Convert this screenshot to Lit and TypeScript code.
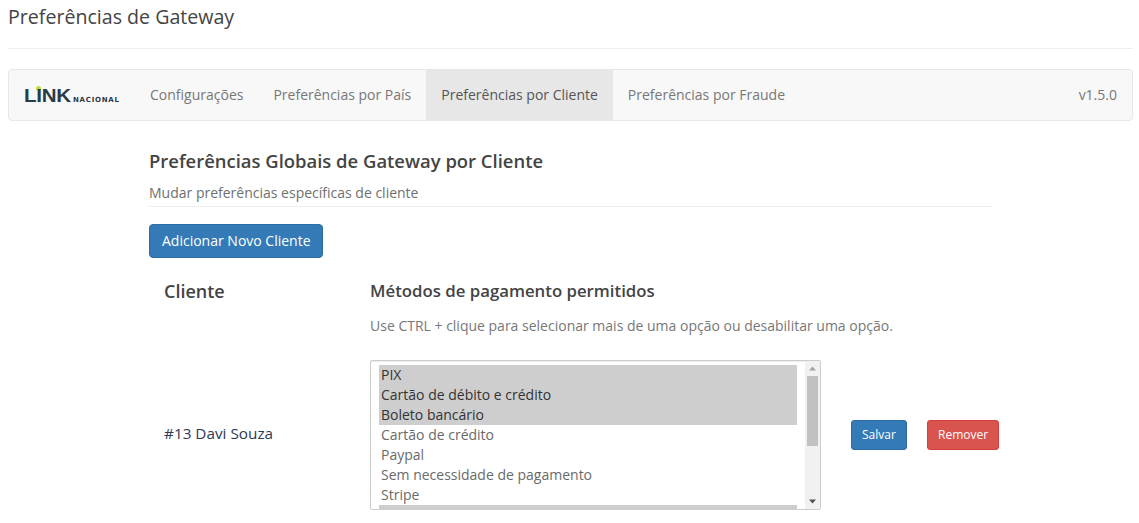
import { LitElement, html, css } from "lit";
import { customElement } from "lit/decorators.js";

const OPTIONS: [string, boolean][] = [
  ["PIX", true],
  ["Cartão de débito e crédito", true],
  ["Boleto bancário", true],
  ["Cartão de crédito", false],
  ["Paypal", false],
  ["Sem necessidade de pagamento", false],
  ["Stripe", false],
  ["", true],
];

@customElement("app-root")
export class AppRoot extends LitElement {
  static styles = css`
    :host {
      display: block;
      height: 523px;
      overflow: hidden;
      background: #fff;
      font-family: "Open Sans", sans-serif;
      font-size: 14px;
      line-height: 20px;
      color: #58595b;
      box-sizing: border-box;
      padding: 0 6px 0 8px;
    }
    * { box-sizing: border-box; }
    .title {
      margin: 0;
      height: 49px;
      padding-top: 4px;
      font-size: 19.6px;
      line-height: 25px;
      font-weight: 400;
      color: #444;
      border-bottom: 1px solid #eee;
    }
    .nav {
      margin-top: 20px;
      height: 52px;
      display: flex;
      align-items: stretch;
      background: #f8f8f8;
      border: 1px solid #e7e7e7;
      border-radius: 4px;
    }
    .brand {
      width: 126px;
      flex: none;
      padding-left: 15px;
      display: flex;
      align-items: center;
    }
    .logo {
      display: flex;
      align-items: baseline;
      position: relative;
      color: #2a3a46;
      font-family: "Liberation Sans", sans-serif;
      font-weight: 700;
      white-space: nowrap;
      margin-top: 1px;
    }
    .logo-link {
      font-size: 18px;
      line-height: 18px;
      letter-spacing: -0.2px;
      transform: scaleX(1.14);
      transform-origin: left center;
      width: 49px;
    }
    .logo-nac {
      font-size: 7px;
      line-height: 8px;
      letter-spacing: 0.75px;
      font-family: "DejaVu Sans", sans-serif;
      font-weight: 700;
    }
    .logo-dot {
      position: absolute;
      left: 12px;
      top: -1px;
      width: 5px;
      height: 5px;
      border-radius: 50%;
      background: #c9d63c;
    }
    .tab {
      padding: 15px;
      color: #777;
      line-height: 20px;
      white-space: nowrap;
    }
    .tab.active {
      color: #555;
      background: #e7e7e7;
    }
    .version {
      margin-left: auto;
      padding: 15px 15px 15px 0;
      color: #777;
    }
    .content {
      width: 843px;
      margin: 28px 0 0 141px;
    }
    .content h2 {
      margin: 0;
      font-size: 18.45px;
      line-height: 24px;
      font-weight: 600;
      color: #444;
    }
    .sub {
      margin: 10px 0 0;
      padding-bottom: 3px;
      line-height: 20px;
      color: #6f6f6f;
      border-bottom: 1px solid #eee;
    }
    .btn {
      display: inline-block;
      border: 1px solid #2e6da4;
      border-radius: 4px;
      background: #337ab7;
      color: #fff;
      font: inherit;
      padding: 6px 12px;
    }
    .add { margin-top: 17px; display: block; height: 34px; width: 174px; white-space: nowrap; }
    .small {
      font-size: 12px;
      line-height: 18px;
      padding: 5px 10px;
      border-radius: 3px;
      height: 30px;
    }
    .danger {
      background: #d9534f;
      border-color: #d43f3a;
    }
    .grid {
      display: grid;
      grid-template-columns: 206px 481px 76px auto;
      width: 850px;
      margin-top: 18px;
      padding-left: 15px;
    }
    .head-client {
      font-size: 18px;
      line-height: 24px;
      font-weight: 600;
      color: #444;
      margin-top: 3px;
    }
    .head-methods {
      font-size: 16.8px;
      line-height: 22px;
      font-weight: 600;
      color: #444;
      margin-top: 4px;
    }
    .hint {
      margin: 14px 0 24px;
      color: #777;
      line-height: 20px;
      white-space: nowrap;
    }
    .client {
      align-self: center;
      color: #2c3a55;
      font-size: 15.3px;
      white-space: nowrap;
      padding-bottom: 4px;
    }
    .cell-mid { align-self: center; }
    .listbox {
      width: 451px;
      height: 150px;
      border: 1px solid #ccc;
      border-radius: 2px;
      display: flex;
      box-shadow: inset 0 1px 1px rgba(0, 0, 0, 0.075);
      overflow: hidden;
    }
    .opts {
      flex: 1;
      padding: 4px 8px;
      min-width: 0;
      overflow: hidden;
    }
    .opt {
      height: 20px;
      line-height: 20px;
      padding: 0 2px;
      color: #6a6a6a;
      white-space: nowrap;
    }
    .opt.sel {
      background: #cecece;
      color: #333;
    }
    .scroll {
      width: 15px;
      flex: none;
      background: #f1f1f1;
      display: flex;
      flex-direction: column;
      align-items: center;
    }
    .arrow { height: 15px; flex: none; display: block; }
    .thumb {
      width: 11px;
      height: 70px;
      flex: none;
      background: #c1c1c1;
    }
    .spacer { flex: 1; }
  `;

  render() {
    return html`
      <h1 class="title">Preferências de Gateway</h1>
      <nav class="nav">
        <div class="brand">
          <div class="logo">
            <span class="logo-dot"></span>
            <span class="logo-link">LINK</span>
            <span class="logo-nac">NACIONAL</span>
          </div>
        </div>
        <div class="tab">Configurações</div>
        <div class="tab">Preferências por País</div>
        <div class="tab active">Preferências por Cliente</div>
        <div class="tab">Preferências por Fraude</div>
        <div class="version">v1.5.0</div>
      </nav>
      <section class="content">
        <h2>Preferências Globais de Gateway por Cliente</h2>
        <p class="sub">Mudar preferências específicas de cliente</p>
        <button class="btn add">Adicionar Novo Cliente</button>
        <div class="grid">
          <div class="head-client">Cliente</div>
          <div>
            <div class="head-methods">Métodos de pagamento permitidos</div>
            <p class="hint">Use CTRL + clique para selecionar mais de uma opção ou desabilitar uma opção.</p>
          </div>
          <div></div>
          <div></div>
          <div class="client">#13 Davi Souza</div>
          <div class="listbox">
            <div class="opts">
              ${OPTIONS.map(
                ([label, sel]) =>
                  html`<div class="opt ${sel ? "sel" : ""}">${label}</div>`
              )}
            </div>
            <div class="scroll">
              <svg class="arrow" width="15" height="15" viewBox="0 0 15 15"><path d="M4 9.5 7.5 5.5 11 9.5Z" fill="#a3a3a3"></path></svg>
              <div class="thumb"></div>
              <div class="spacer"></div>
              <svg class="arrow" width="15" height="15" viewBox="0 0 15 15"><path d="M4 5.5 7.5 9.5 11 5.5Z" fill="#505050"></path></svg>
            </div>
          </div>
          <div class="cell-mid"><button class="btn small">Salvar</button></div>
          <div class="cell-mid"><button class="btn small danger">Remover</button></div>
        </div>
      </section>
    `;
  }
}
